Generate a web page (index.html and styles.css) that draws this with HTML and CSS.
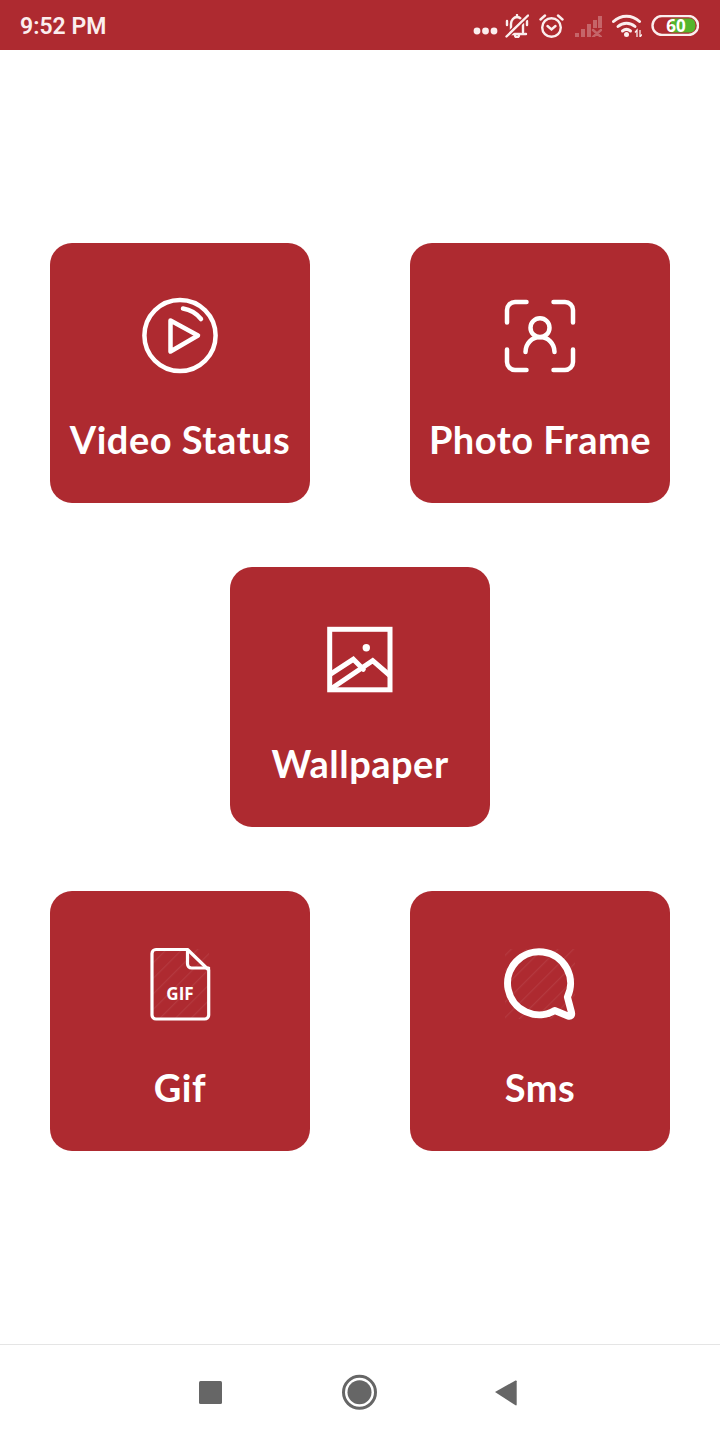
FILE: index.html
```html
<!DOCTYPE html>
<html>
    <head>
        <meta charset="utf-8" />
        <title>Status App</title>
        <link rel="stylesheet" href="styles.css">
    </head>
    <body>
        <div class="status_bar">
            <span class="status_time">9:52 PM</span>
            <div class="status_icons">
                <svg class="ic_dots" width="26" height="8" viewBox="0 0 26 8">
                    <circle cx="4" cy="4" r="3.4"/><circle cx="12.5" cy="4" r="3.4"/><circle cx="21" cy="4" r="3.4"/>
                </svg>
                <svg class="ic_bell" width="24" height="24" viewBox="0 0 24 24">
                    <path d="M3 20H21M6 18V10C6 6 9 3 12 3C15 3 18 6 18 10V18" class="line"/>
                    <path d="M12 3V1M10 21C10 24 14 24 14 21" class="line"/>
                    <path d="M2 7V11M22 7V11" class="line"/>
                    <path d="M1.500 22.500L23 1.500" class="cut"/>
                    <path d="M1.500 22.500L23 1.500" class="line"/>
                </svg>
                <svg class="ic_alarm" width="25" height="24" viewBox="0 0 25 24">
                    <circle cx="12.500" cy="13.500" r="9.300" class="line"/>
                    <path d="M8.500 12L12.500 15.500L16.500 12" class="line"/>
                    <path d="M1.500 5.500L6 1.500M23.500 5.500L19 1.500" class="line"/>
                </svg>
                <svg class="ic_signal" width="27" height="21" viewBox="0 0 27 21">
                    <rect x="0" y="17" width="4" height="4"/>
                    <rect x="6" y="13" width="4" height="8"/>
                    <rect x="12" y="8" width="4" height="13"/>
                    <rect x="18" y="4" width="4" height="8"/>
                    <rect x="23" y="0" width="4" height="12"/>
                    <path d="M18 14L26 21M26 14L18 21" class="line"/>
                </svg>
                <svg class="ic_wifi" width="30" height="23" viewBox="0 0 30 23">
                    <path d="M1.500 7.500C9 0.500 20 0.500 27.500 7.500" class="wide"/>
                    <path d="M6 12.500C11 8 18 8 23 12.500" class="wide"/>
                    <path d="M10.500 17C13 15 16 15 18.500 17" class="wide"/>
                    <circle cx="14.500" cy="20.500" r="2.500"/>
                    <path d="M25 23V16L23 18.500M28 16V23L30 20.500" class="thin"/>
                </svg>
                <svg class="ic_battery" width="48" height="21" viewBox="0 0 48 21">
                    <path d="M20 3.500H39C42 3.500 44.500 6 44.500 10.500C44.500 15 42 17.500 39 17.500H20Z" class="charge"/>
                    <rect x="1.500" y="1" width="45.500" height="19" rx="9.500" class="line"/>
                    <text x="25" y="16.500" class="battery_num">60</text>
                </svg>
            </div>
        </div>

        <div class="menu">
            <div class="menu_row">
                <div class="menu_card">
                    <svg class="card_icon" viewBox="0 0 80 80">
                        <circle cx="40" cy="39.500" r="35.600"/>
                        <path d="M43 12.500A29 29 0 0 1 61 23"/>
                        <path d="M30.500 24.500L58 39.500L30.500 55.500Z"/>
                    </svg>
                    <span class="card_label">Video Status</span>
                </div>
                <div class="menu_card">
                    <svg class="card_icon" viewBox="0 0 80 80">
                        <path d="M7 26.500V14A8 8 0 0 1 15 6H26.500"/>
                        <path d="M53.500 6H65A8 8 0 0 1 73 14V26.500"/>
                        <path d="M7 53.500V66A8 8 0 0 0 15 74H26.500"/>
                        <path d="M53.500 74H65A8 8 0 0 0 73 66V53.500"/>
                        <circle cx="40" cy="31.700" r="9.500"/>
                        <path d="M25.500 56A14.500 15 0 0 1 54.500 56"/>
                    </svg>
                    <span class="card_label">Photo Frame</span>
                </div>
            </div>
            <div class="menu_row">
                <div class="menu_card">
                    <svg class="card_icon icon_square" viewBox="0 0 80 80">
                        <rect x="9.700" y="9.300" width="60.300" height="60.500"/>
                        <circle cx="46.300" cy="27.700" r="3.700" class="solid"/>
                        <path d="M11.700 53.300L33.300 39.300L43.300 49.300"/>
                        <path d="M13.300 67.300L52.700 40.700L69.300 55"/>
                    </svg>
                    <span class="card_label">Wallpaper</span>
                </div>
            </div>
            <div class="menu_row">
                <div class="menu_card">
                    <svg class="card_icon icon_thin" viewBox="0 0 80 80">
                        <defs>
                            <pattern id="hatch" width="11" height="11" patternUnits="userSpaceOnUse" patternTransform="rotate(-45)">
                                <rect width="11" height="1.200" class="hatch_line"/>
                            </pattern>
                        </defs>
                        <rect x="12" y="5" width="57" height="70" fill="url(#hatch)" class="hatch_box"/>
                        <path d="M16 5.500H47.500L68.700 26V71A4 4 0 0 1 64.700 75H16A4 4 0 0 1 12 71V9.500A4 4 0 0 1 16 5.500Z"/>
                        <path d="M47.500 6V20A4 4 0 0 0 51.500 24H68.700"/>
                        <text x="40" y="56" class="gif_text">GIF</text>
                    </svg>
                    <span class="card_label">Gif</span>
                </div>
                <div class="menu_card">
                    <svg class="card_icon icon_bold" viewBox="0 0 80 80">
                        <rect x="5" y="5" width="70" height="70" fill="url(#hatch)" class="hatch_box"/>
                        <path d="M67.400 53A31.500 31.500 0 1 0 54.700 66.600L68 72Q72.500 73 71.500 68.500Z"/>
                    </svg>
                    <span class="card_label">Sms</span>
                </div>
            </div>
        </div>

        <div class="nav_bar">
            <svg width="40" height="40" viewBox="0 0 40 40">
                <rect x="7" y="9" width="23" height="23" rx="1.500"/>
            </svg>
            <svg width="40" height="40" viewBox="0 0 40 40">
                <circle cx="19.500" cy="20.300" r="16" class="ring"/>
                <circle cx="19.500" cy="20.300" r="12"/>
            </svg>
            <svg width="40" height="40" viewBox="0 0 40 40">
                <path d="M7 20L27.500 8.500C28.200 8.200 28.700 8.600 28.700 9.300V32.500C28.700 33.200 28.200 33.600 27.500 33.300Z"/>
            </svg>
        </div>
    </body>
</html>
```

FILE: styles.css
```css
html,body{
    margin:0;
    height:1440px;
    background:#fff;
    overflow:hidden;
}
.status_bar{
    height:50px;
    background:#ae2a30;
    display:flex;
    justify-content:space-between;
    align-items:center;
    padding:0 21px 0 20px;
}
.status_time{
    font-family:Roboto,sans-serif;
    font-weight:600;
    font-size:23px;
    color:#fbeeee;
    padding-top:2px;
}
.status_icons{
    display:flex;
    align-items:center;
    gap:10px;
    padding-top:1px;
}
.status_icons svg{
    fill:#fbeeee;
}
.status_icons .line{
    fill:none;
    stroke:#fbeeee;
    stroke-width:2.400;
    stroke-linecap:round;
}
.status_icons .wide{
    fill:none;
    stroke:#fbeeee;
    stroke-width:3;
    stroke-linecap:round;
}
.status_icons .cut{
    fill:none;
    stroke:#ae2a30;
    stroke-width:5;
}
.status_icons .thin{
    fill:none;
    stroke:#fbeeee;
    stroke-width:1.300;
}
/*信号是暗的*/
.ic_signal{
    opacity:.3;
    margin-top:1px;
}
.ic_dots{
    margin-top:11px;
    margin-right:-4px;
}
.ic_alarm{
    margin-right:1px;
}
.ic_wifi{
    margin-right:-1px;
}
.status_icons .charge{
    fill:#55b52c;
}
.battery_num{
    font-family:"Open Sans",sans-serif;
    font-weight:700;
    font-size:17px;
    text-anchor:middle;
    fill:#fff;
}
.menu{
    height:1101px;
    padding-top:193px;
    display:flex;
    flex-direction:column;
    gap:64px;
}
.menu_row{
    display:flex;
    justify-content:center;
    gap:100px;
}
.menu_card{
    width:260px;
    height:260px;
    box-sizing:border-box;
    padding-top:53px;
    background:#ae2a30;
    border-radius:22px;
    display:flex;
    flex-direction:column;
    align-items:center;
}
.card_icon{
    width:80px;
    height:80px;
    fill:none;
    stroke:#fff;
    stroke-width:4.500;
    stroke-linecap:round;
    stroke-linejoin:round;
}
.icon_square{
    stroke-linejoin:miter;
    stroke-width:5;
}
.icon_thin{
    stroke-width:3.200;
}
.icon_bold{
    stroke-width:7;
}
.card_icon .solid{
    fill:#fff;
    stroke:none;
}
.hatch_box{
    stroke:none;
}
.hatch_line{
    fill:#fff;
    fill-opacity:.07;
    stroke:none;
}
.gif_text{
    font-family:"Open Sans",sans-serif;
    font-weight:700;
    font-size:17px;
    text-anchor:middle;
    fill:#fff;
    stroke:none;
}
.card_label{
    margin-top:43px;
    font-family:Lato,sans-serif;
    font-weight:700;
    font-size:38px;
    letter-spacing:.5px;
    line-height:40px;
    color:#fff;
    white-space:nowrap;
}
.nav_bar{
    height:96px;
    box-sizing:border-box;
    border-top:1px solid #e5e5e5;
    padding-top:27px;
    display:flex;
    justify-content:center;
    align-items:flex-start;
    gap:108px;
}
.nav_bar svg{
    fill:#666;
}
.nav_bar .ring{
    fill:none;
    stroke:#666;
    stroke-width:3;
}
```
